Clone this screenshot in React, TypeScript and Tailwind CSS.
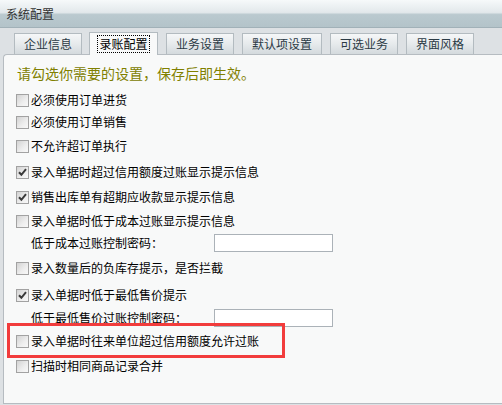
import React from 'react';

type Item =
  | { kind: 'check'; text: string; checked?: boolean; mt: string; marked?: boolean }
  | { kind: 'pwd'; label: string; mt: string };

const items: Item[] = [
  { kind: 'check', text: '必须使用订单进货', mt: 'mt-[5px]' },
  { kind: 'check', text: '必须使用订单销售', mt: 'mt-0' },
  { kind: 'check', text: '不允许超订单执行', mt: 'mt-[2px]' },
  { kind: 'check', text: '录入单据时超过信用额度过账显示提示信息', checked: true, mt: 'mt-[4px]' },
  { kind: 'check', text: '销售出库单有超期应收款显示提示信息', checked: true, mt: 'mt-[3px]' },
  { kind: 'check', text: '录入单据时低于成本过账显示提示信息', mt: 'mt-[2px]' },
  { kind: 'pwd', label: '低于成本过账控制密码：', mt: 'mt-0' },
  { kind: 'check', text: '录入数量后的负库存提示，是否拦截', mt: 'mt-[3px]' },
  { kind: 'check', text: '录入单据时低于最低售价提示', checked: true, mt: 'mt-[5px]' },
  { kind: 'pwd', label: '低于最低售价过账控制密码：', mt: 'mt-px' },
  { kind: 'check', text: '录入单据时往来单位超过信用额度允许过账', mt: 'mt-px', marked: true },
  { kind: 'check', text: '扫描时相同商品记录合并', mt: 'mt-[3px]' },
];

const tabs = ['企业信息', '录账配置', '业务设置', '默认项设置', '可选业务', '界面风格'];

function Box({ checked }: { checked?: boolean }) {
  return (
    <span className="w-[13px] h-[13px] shrink-0 border border-[#a2a2a2] bg-[linear-gradient(135deg,#d3d3d3_0%,#eeeeee_60%,#f8f8f8_100%)] flex items-center justify-center">
      {checked && (
        <svg width="9" height="9" viewBox="0 0 9 9">
          <path d="M1 4.2 L3.4 6.8 L8 1.2" fill="none" stroke="#3a3a3a" strokeWidth="2" />
        </svg>
      )}
    </span>
  );
}

export default function App() {
  return (
    <div className="w-[502px] h-[405px] overflow-hidden bg-[#dde1e4] flex flex-col font-['Noto_Sans_CJK_SC',sans-serif]">
      <div className="h-[28px] shrink-0 border-b border-[#a1b1b8] bg-[linear-gradient(to_bottom,#f6f9fa_0%,#e2e8eb_46%,#bac9cf_54%,#b3c3c9_100%)] pl-[6px] flex items-center text-[12px] text-[#333] leading-none">
        系统配置
      </div>

      <div className="h-[26px] shrink-0 relative z-10 flex items-end gap-[8px] pl-[14px]">
        {tabs.map((t, i) =>
          i === 1 ? (
            <div key={t} className="w-[69px] h-[23px] -mb-px -ml-px bg-[#f8f9f9] border-x border-t border-[#b3bbc0] flex items-center justify-center">
              <span className="border border-dotted border-black px-[1px] h-[18px] flex items-center text-[12px] text-black leading-none">{t}</span>
            </div>
          ) : (
            <div
              key={t}
              className={`${t === '默认项设置' ? 'w-[80px]' : 'w-[68px]'} h-[21px] border border-b-0 border-[#b3bbc0] bg-[linear-gradient(to_bottom,#f5f7f8_0%,#e6eaec_50%,#d4dadd_100%)] flex items-center justify-center text-[12px] text-[#2b3a45] leading-none`}
            >
              {t}
            </div>
          )
        )}
      </div>

      <div className="h-[350px] shrink-0 ml-[3px] bg-[#f8f9f9] border-l border-t border-b border-[#b6bcc1] rounded-tl-[4px] pt-[7px] pl-[12px] flex flex-col">
        <div className="h-[22px] ml-px flex items-center text-[14px] text-[#808000] leading-none">
          请勾选你需要的设置，保存后即生效。
        </div>
        {items.map((it, i) =>
          it.kind === 'check' ? (
            <div key={i} className={`${it.mt} relative h-[22px] flex items-center gap-[2px] text-[12px] text-black leading-none`}>
              <Box checked={it.checked} />
              <span>{it.text}</span>
              {it.marked && (
                <span className="absolute -left-[9px] -top-[7px] w-[278px] h-[35px] border-[3px] border-[#f23c3c] pointer-events-none" />
              )}
            </div>
          ) : (
            <div key={i} className={`${it.mt} h-[22px] flex items-center pl-[15px] text-[12px] text-black leading-none`}>
              <span className="w-[183px]">{it.label}</span>
              <span className="w-[119px] h-[18px] border border-[#abb2b8] bg-white" />
            </div>
          )
        )}
      </div>
    </div>
  );
}
